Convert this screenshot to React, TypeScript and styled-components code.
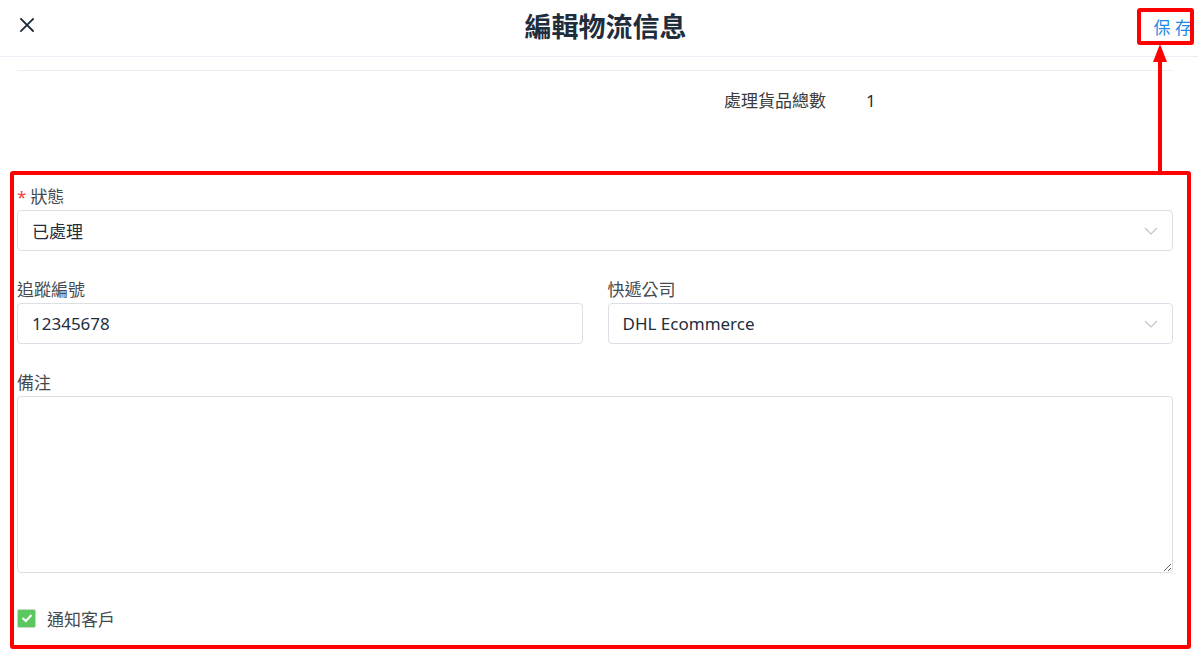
import React from 'react';
import styled, { createGlobalStyle } from 'styled-components';

const GlobalStyle = createGlobalStyle`
  html, body {
    margin: 0;
    padding: 0;
    background: #ffffff;
  }
  body {
    font-family: "Noto Sans", "Noto Sans CJK TC", sans-serif;
    color: #1f2d3d;
  }
  * {
    box-sizing: border-box;
  }
`;

const CloseIcon: React.FC = () => (
  <svg width="16" height="16" viewBox="0 0 16 16">
    <path d="M2 2 L14 14 M14 2 L2 14" stroke="#1f2d3d" strokeWidth="1.8" strokeLinecap="square" />
  </svg>
);

const Chevron: React.FC = () => (
  <svg width="14" height="8" viewBox="0 0 14 8">
    <path d="M1 1 L7 7 L13 1" fill="none" stroke="#c0c4cc" strokeWidth="1.2" />
  </svg>
);

const Check: React.FC = () => (
  <svg width="12" height="10" viewBox="0 0 12 10">
    <path d="M1.5 5 L4.8 8 L10.5 2" fill="none" stroke="#ffffff" strokeWidth="2" />
  </svg>
);

const App: React.FC = () => {
  return (
    <Page>
      <GlobalStyle />
      <Header>
        <CloseButton>
          <CloseIcon />
        </CloseButton>
        <Title>編輯物流信息</Title>
        <SaveButton>保 存</SaveButton>
      </Header>

      <Content>
        <Divider />
        <Summary>
          <SummaryLabel>處理貨品總數</SummaryLabel>
          <SummaryValue>1</SummaryValue>
        </Summary>

        <FormItem>
          <Label required>狀態</Label>
          <Select>
            <span>已處理</span>
            <Chevron />
          </Select>
        </FormItem>

        <FormRow>
          <FormItem>
            <Label>追蹤編號</Label>
            <Input defaultValue="12345678" />
          </FormItem>
          <FormItem>
            <Label>快遞公司</Label>
            <Select>
              <span>DHL Ecommerce</span>
              <Chevron />
            </Select>
          </FormItem>
        </FormRow>

        <FormItem>
          <Label>備注</Label>
          <TextArea />
        </FormItem>

        <CheckRow>
          <CheckBox>
            <Check />
          </CheckBox>
          <CheckLabel>通知客戶</CheckLabel>
        </CheckRow>
      </Content>

      {/* annotations drawn over the screenshot */}
      <Highlight top={8} left={1137} width={57} height={37} />
      <Highlight top={171} left={10} width={1181} height={478} />
      <Arrow width="14" height="130" viewBox="0 0 14 130">
        <polygon points="7,0 0,18 14,18" fill="#ff0000" />
        <rect x="5" y="16" width="4" height="114" fill="#ff0000" />
      </Arrow>
    </Page>
  );
};

const Page = styled.div`
  position: relative;
  width: 1198px;
  height: 672px;
  overflow: hidden;
`;

const Header = styled.div`
  height: 57px;
  display: flex;
  align-items: center;
  justify-content: space-between;
  padding: 0 6px 0 19px;
  border-bottom: 1px solid #ebeef5;
`;

const CloseButton = styled.div`
  width: 60px;
  display: flex;
  align-items: center;
  padding-bottom: 6px;
`;

const Title = styled.div`
  font-size: 27px;
  font-weight: 600;
  color: #1f2d3d;
  padding-bottom: 6px;
  margin-left: 35px;
`;

const SaveButton = styled.div`
  width: 95px;
  text-align: right;
  font-size: 17px;
  color: #1f8ae4;
  padding-bottom: 3px;
`;

const Content = styled.div`
  padding: 0 25px 0 17px;
`;

const Divider = styled.div`
  height: 14px;
  border-bottom: 1px solid #ebeef5;
`;

const Summary = styled.div`
  display: grid;
  grid-template-columns: 809px 60px;
  column-gap: 40px;
  padding: 18px 0 72px;
  line-height: 24px;
`;

const SummaryLabel = styled.div`
  text-align: right;
  font-size: 17px;
  color: #3a3a3a;
`;

const SummaryValue = styled.div`
  font-size: 17px;
  color: #1f2d3d;
`;

const FormRow = styled.div`
  display: grid;
  grid-template-columns: 1fr 1fr;
  column-gap: 25px;
`;

const FormItem = styled.div`
  display: flex;
  flex-direction: column;
  margin-bottom: 27px;
`;

const Label = styled.div<{ required?: boolean }>`
  font-size: 17px;
  line-height: 24px;
  color: #444a50;
  margin-bottom: 1px;
  &::before {
    content: ${({ required }) => (required ? '"*"' : 'none')};
    color: #f04134;
    margin-right: 4px;
  }
`;

const fieldBase = `
  width: 100%;
  border: 1px solid #dcdfe6;
  border-radius: 4px;
  background: #ffffff;
  font-family: "Noto Sans", "Noto Sans CJK TC", sans-serif;
  font-size: 17px;
  color: #1f2d3d;
`;

const Select = styled.div`
  ${fieldBase}
  height: 41px;
  display: flex;
  align-items: center;
  justify-content: space-between;
  padding: 0 14px 0 14px;
`;

const Input = styled.input`
  ${fieldBase}
  height: 41px;
  padding: 0 14px;
  outline: none;
`;

const TextArea = styled.textarea`
  ${fieldBase}
  height: 177px;
  padding: 8px 14px;
  outline: none;
  resize: vertical;
  display: block;
`;

const CheckRow = styled.div`
  display: flex;
  align-items: center;
  gap: 11px;
  margin-top: 33px;
  height: 24px;
`;

const CheckBox = styled.div`
  width: 19px;
  height: 19px;
  border-radius: 2px;
  background: #5ac85e;
  border: 1px solid #c8d8c8;
  display: flex;
  align-items: center;
  justify-content: center;
`;

const CheckLabel = styled.span`
  font-size: 17px;
  color: #444a50;
`;

const Highlight = styled.div<{ top: number; left: number; width: number; height: number }>`
  position: absolute;
  top: ${({ top }) => top}px;
  left: ${({ left }) => left}px;
  width: ${({ width }) => width}px;
  height: ${({ height }) => height}px;
  border: 4px solid #ff0000;
  border-radius: 3px;
  pointer-events: none;
`;

const Arrow = styled.svg`
  position: absolute;
  top: 44px;
  left: 1153px;
  pointer-events: none;
`;

export default App;
